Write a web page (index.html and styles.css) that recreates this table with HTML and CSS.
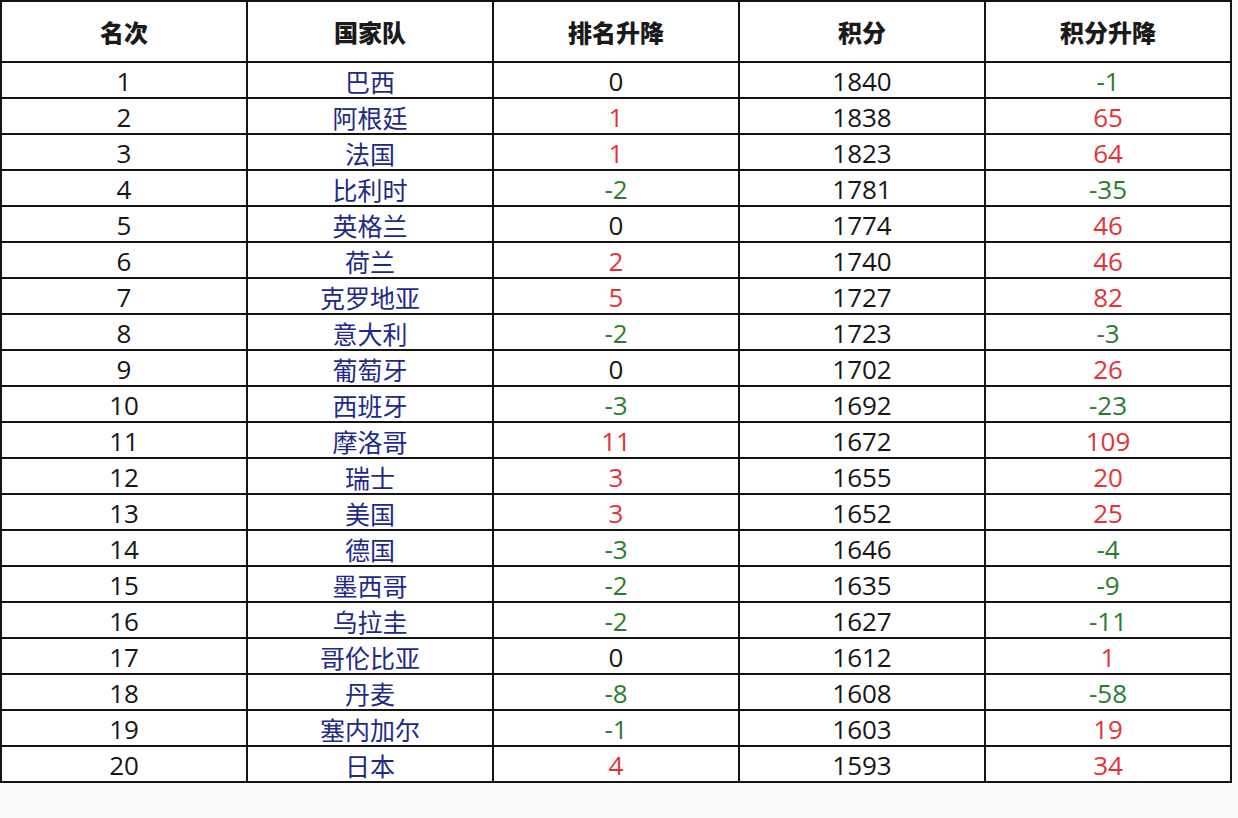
FILE: index.html
```html
<!DOCTYPE html>
<html lang="zh-CN">
<head>
<meta charset="utf-8">
<title>排名</title>
<link rel="stylesheet" href="styles.css">
</head>
<body>
<table class="rank">
<colgroup><col class="c"><col class="c"><col class="c"><col class="c"><col class="c"></colgroup>
<thead>
<tr><th>名次</th><th>国家队</th><th>排名升降</th><th>积分</th><th>积分升降</th></tr>
</thead>
<tbody>
<tr><td>1</td><td class="team">巴西</td><td>0</td><td>1840</td><td class="dn">-1</td></tr>
<tr><td>2</td><td class="team">阿根廷</td><td class="up">1</td><td>1838</td><td class="up">65</td></tr>
<tr><td>3</td><td class="team">法国</td><td class="up">1</td><td>1823</td><td class="up">64</td></tr>
<tr><td>4</td><td class="team">比利时</td><td class="dn">-2</td><td>1781</td><td class="dn">-35</td></tr>
<tr><td>5</td><td class="team">英格兰</td><td>0</td><td>1774</td><td class="up">46</td></tr>
<tr><td>6</td><td class="team">荷兰</td><td class="up">2</td><td>1740</td><td class="up">46</td></tr>
<tr><td>7</td><td class="team">克罗地亚</td><td class="up">5</td><td>1727</td><td class="up">82</td></tr>
<tr><td>8</td><td class="team">意大利</td><td class="dn">-2</td><td>1723</td><td class="dn">-3</td></tr>
<tr><td>9</td><td class="team">葡萄牙</td><td>0</td><td>1702</td><td class="up">26</td></tr>
<tr><td>10</td><td class="team">西班牙</td><td class="dn">-3</td><td>1692</td><td class="dn">-23</td></tr>
<tr><td>11</td><td class="team">摩洛哥</td><td class="up">11</td><td>1672</td><td class="up">109</td></tr>
<tr><td>12</td><td class="team">瑞士</td><td class="up">3</td><td>1655</td><td class="up">20</td></tr>
<tr><td>13</td><td class="team">美国</td><td class="up">3</td><td>1652</td><td class="up">25</td></tr>
<tr><td>14</td><td class="team">德国</td><td class="dn">-3</td><td>1646</td><td class="dn">-4</td></tr>
<tr><td>15</td><td class="team">墨西哥</td><td class="dn">-2</td><td>1635</td><td class="dn">-9</td></tr>
<tr><td>16</td><td class="team">乌拉圭</td><td class="dn">-2</td><td>1627</td><td class="dn">-11</td></tr>
<tr><td>17</td><td class="team">哥伦比亚</td><td>0</td><td>1612</td><td class="up">1</td></tr>
<tr><td>18</td><td class="team">丹麦</td><td class="dn">-8</td><td>1608</td><td class="dn">-58</td></tr>
<tr><td>19</td><td class="team">塞内加尔</td><td class="dn">-1</td><td>1603</td><td class="up">19</td></tr>
<tr><td>20</td><td class="team">日本</td><td class="up">4</td><td>1593</td><td class="up">34</td></tr>
</tbody>
</table>
</body>
</html>
```
FILE: styles.css
```css
html, body {
  margin: 0;
  padding: 0;
  background: #f8f9fb;
}
body {
  width: 1238px;
  height: 818px;
  overflow: hidden;
}
.rank {
  border-collapse: collapse;
  table-layout: fixed;
  width: 1232px;
  margin: 0;
  background: #ffffff;
  border: 2px solid #141414;
}
.rank col.c {
  width: 246px;
}
.rank th,
.rank td {
  border: 2px solid #141414;
  padding: 0;
  text-align: center;
  vertical-align: middle;
  overflow: hidden;
  white-space: nowrap;
}
.rank th {
  height: 59px;
  font-family: "Noto Sans CJK SC", "Noto Sans", sans-serif;
  font-weight: 900;
  font-size: 24px;
  color: #1a1a1a;
  line-height: 59px;
}
.rank td {
  height: 31px;
  font-family: "Open Sans", "Noto Sans CJK SC", sans-serif;
  font-size: 26px;
  color: #161616;
  line-height: 31px;
  padding-top: 3px;
  box-sizing: content-box;
}
.rank td.team {
  font-family: "Noto Sans CJK SC", sans-serif;
  font-size: 25px;
  color: #1e2a8a;
}
.rank td.up {
  color: #e3323a;
}
.rank td.dn {
  color: #2a7d2e;
}
```
